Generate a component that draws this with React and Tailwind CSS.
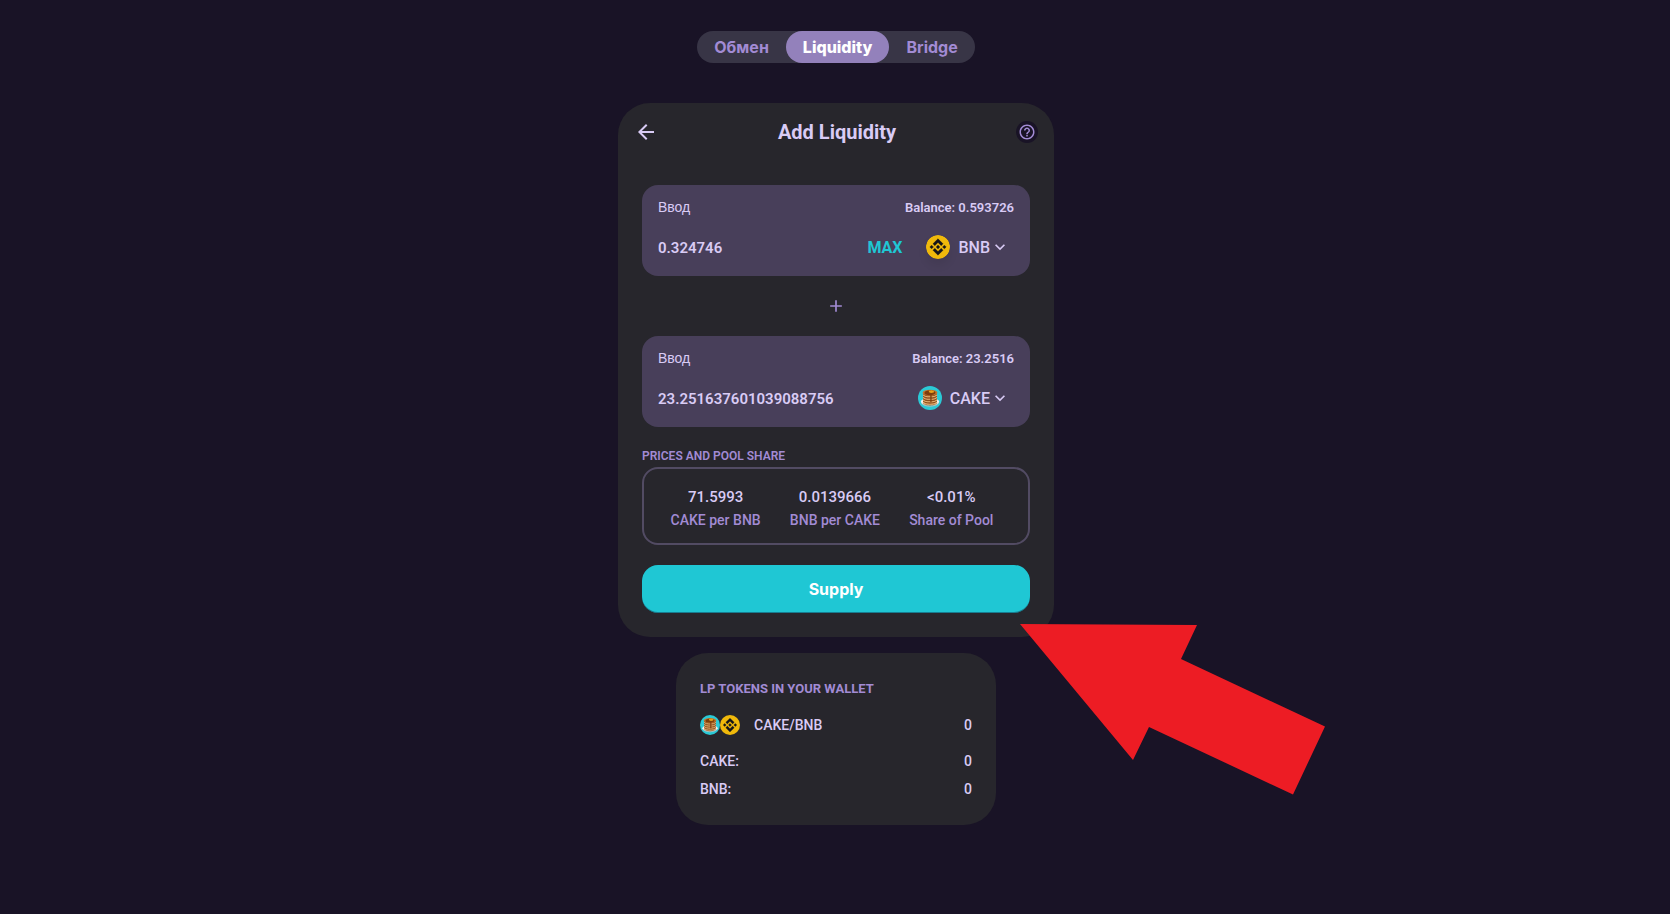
import React, { useState } from 'react';
import { MdAdd, MdArrowBack, MdHelpOutline, MdKeyboardArrowDown } from 'react-icons/md';

const TABS = ['Обмен', 'Liquidity', 'Bridge'];

const PRICES = [
  { value: '71.5993', label: 'CAKE per BNB' },
  { value: '0.0139666', label: 'BNB per CAKE' },
  { value: '<0.01%', label: 'Share of Pool' },
];

function BnbLogo({ className }) {
  return (
    <svg viewBox="0 0 32 32" className={className} aria-hidden="true">
      <circle cx="16" cy="16" r="16" fill="#f0b90b" />
      <path
        fill="#14151a"
        stroke="#14151a"
        strokeWidth="0.4"
        transform="translate(-1.6 -1.6) scale(1.1)"
        d="M12.116 14.404L16 10.52l3.886 3.886 2.26-2.26L16 6l-6.144 6.144 2.26 2.26zM6 16l2.26-2.26L10.52 16l-2.26 2.26L6 16zm6.116 1.596L16 21.48l3.886-3.886 2.26 2.259L16 26l-6.144-6.144-.003-.003 2.263-2.257zM21.48 16l2.26-2.26L26 16l-2.26 2.26L21.48 16zm-3.188-.002h.002V16L16 18.294l-2.291-2.29-.004-.004.004-.003.401-.402.195-.195L16 13.706l2.293 2.293z"
      />
    </svg>
  );
}

function CakeLogo({ className }) {
  return (
    <svg viewBox="0 0 24 24" className={className} aria-hidden="true">
      <circle cx="12" cy="12" r="12" fill="#2bcad6" />
      {/* plate */}
      <ellipse cx="12" cy="15.8" rx="9.2" ry="3.8" fill="#f3eeee" />
      <path d="M3.2 16.6c1 2 4.6 3.2 8.8 3.2s7.8-1.2 8.8-3.2c-.5 2.6-4.3 4-8.8 4s-8.3-1.4-8.8-4z" fill="#c9b9b9" />
      {/* pancakes */}
      <path d="M5 6.5h14v10.3c0 1.500-3.100 2.600-7 2.600s-7-1.100-7-2.600z" fill="#8f4f1e" />
      <path
        d="M5 8.700c1 1.500 4 2.100 7 2.100s6-.6 7-2.100M5 11.200c1 1.500 4 2.100 7 2.100s6-.6 7-2.100M5 13.700c1 1.500 4 2.100 7 2.100s6-.6 7-2.100M5 16.100c1 1.500 4 2.100 7 2.100s6-.6 7-2.100"
        fill="none"
        stroke="#e9b878"
        strokeWidth="1.1"
      />
      <ellipse cx="12" cy="6.700" rx="7.400" ry="3" fill="#c4752c" />
      {/* syrup */}
      <path d="M6.500 6.500c.4-1.400 2.800-2 5.500-2s5.100.6 5.500 2c.2 1.300-1.500 2.200-3.900 2.500v6.600c0 .7-1.300.7-1.300 0V9.200C8.800 9.200 6.100 8.300 6.500 6.500z" fill="#7d3d0c" />
      <path d="M10.800 4.800l2.900-.6 2.300 1-.2 1.300-2.700.6-2.100-.9z" fill="#e9a31b" />
    </svg>
  );
}

function CurrencyPanel({ id, symbol, balance, value, onChange, onMax, logo }) {
  return (
    <div className="rounded-2xl bg-[#483f5a]">
      <div className="flex items-center justify-between px-4 pt-3 leading-[21px]">
        <label htmlFor={id} className="font-['Liberation_Sans',sans-serif] text-sm leading-[21px]">Ввод</label>
        <span className="text-[13px] font-semibold">Balance: {balance}</span>
      </div>
      <div className="flex items-center py-3 pl-4 pr-5">
        <input
          id={id}
          type="text"
          inputMode="decimal"
          value={value}
          onChange={(e) => onChange(e.target.value)}
          className="h-[34px] min-w-0 flex-1 bg-transparent pt-px text-[15px] font-semibold outline-none"
        />
        {onMax && (
          <button type="button" onClick={onMax} className="mr-6 pt-px text-base font-bold text-[#1fc7d4]">MAX</button>
        )}
        <button type="button" className="flex h-[34px] items-center text-base font-medium">
          {logo}
          <span className="ml-2 pt-px">{symbol}</span>
          <MdKeyboardArrowDown className="h-5 w-5" />
        </button>
      </div>
    </div>
  );
}

function WalletRow({ label, amount }) {
  return (
    <div className="flex h-6 items-center justify-between">
      <span>{label}</span>
      <span>{amount}</span>
    </div>
  );
}

export default function App() {
  const [tab, setTab] = useState('Liquidity');
  const [bnb, setBnb] = useState('0.324746');
  const [cake, setCake] = useState('23.251637601039088756');

  return (
    <div className="flex min-h-screen flex-col items-center overflow-x-hidden bg-[#191326] pt-[31px] pl-0.5 font-[Roboto,sans-serif] text-[#d9cbf5]">
      <nav className="flex h-8 rounded-2xl bg-[#383546]">
        {TABS.map((name) => (
          <button
            key={name}
            type="button"
            onClick={() => setTab(name)}
            className={`rounded-2xl px-[17px] font-[Inter,sans-serif] text-base ${
              tab === name ? 'bg-[#9381bb] font-extrabold text-white' : 'font-bold text-[#a28bd4]'
            }`}
          >
            {name}
          </button>
        ))}
      </nav>

      <main className="relative mt-10 w-full max-w-[436px] rounded-[32px] bg-[#27262c] px-6 pb-6">
        <header className="-mx-2 flex h-[58px] items-center justify-between">
          <button type="button" aria-label="Back">
            <MdArrowBack className="h-6 w-6" />
          </button>
          <h1 className="text-xl font-bold">Add Liquidity</h1>
          <button
            type="button"
            aria-label="Help"
            className="flex h-[22px] w-[22px] items-center justify-center rounded-full bg-[#191326] text-[#a28bd4]"
          >
            <MdHelpOutline className="h-[18px] w-[18px]" />
          </button>
        </header>

        <div className="mt-6">
          <CurrencyPanel
            id="bnb-amount"
            symbol="BNB"
            balance="0.593726"
            value={bnb}
            onChange={setBnb}
            onMax={() => setBnb('0.593726')}
            logo={<BnbLogo className="h-6 w-6 rounded-full shadow-[0_6px_10px_rgba(0,0,0,0.08)]" />}
          />
          <div className="flex h-[60px] items-center justify-center text-[#a28bd4]">
            <MdAdd className="h-5 w-5" />
          </div>
          <CurrencyPanel
            id="cake-amount"
            symbol="CAKE"
            balance="23.2516"
            value={cake}
            onChange={setCake}
            logo={<CakeLogo className="h-6 w-6" />}
          />
        </div>

        <h2 className="mt-5 mb-0.5 text-xs leading-[18px] font-semibold text-[#a28bd4]">PRICES AND POOL SHARE</h2>
        <div className="flex justify-around rounded-2xl border-2 border-[#524b63] pt-4 pr-5 pb-3 pl-3 text-center font-medium">
          {PRICES.map((price) => (
            <div key={price.label}>
              <p className="text-[15px] leading-6">{price.value}</p>
              <p className="text-sm leading-[22px] text-[#a28bd4]">{price.label}</p>
            </div>
          ))}
        </div>

        <button
          type="button"
          className="mt-5 h-12 w-full rounded-2xl bg-[#1fc7d4] font-[Inter,sans-serif] text-base font-bold text-white shadow-[inset_0_-1px_0_rgba(14,14,44,0.4)]"
        >
          Supply
        </button>

        {/* pointer towards the Supply button */}
        <svg
          viewBox="0 0 306 172"
          className="pointer-events-none absolute top-[521px] left-[402px] z-10 h-[172px] w-[306px]"
          aria-hidden="true"
        >
          <path d="M0 0L177 1L161 35L305 102.5L273 170.5L129 103L113 136Z" fill="#ed1c24" />
        </svg>
      </main>

      <section className="mt-4 w-full max-w-[320px] rounded-[32px] bg-[#27262c] p-6 text-sm font-medium">
        <h2 className="text-[13px] leading-6 font-bold text-[#a28bd4]">LP TOKENS IN YOUR WALLET</h2>
        <div className="mt-3 mb-3 flex h-6 items-center">
          <CakeLogo className="h-5 w-5" />
          <BnbLogo className="h-5 w-5" />
          <span className="ml-3.5">CAKE/BNB</span>
          <span className="ml-auto">0</span>
        </div>
        <div className="space-y-1">
          <WalletRow label="CAKE:" amount="0" />
          <WalletRow label="BNB:" amount="0" />
        </div>
      </section>
    </div>
  );
}
